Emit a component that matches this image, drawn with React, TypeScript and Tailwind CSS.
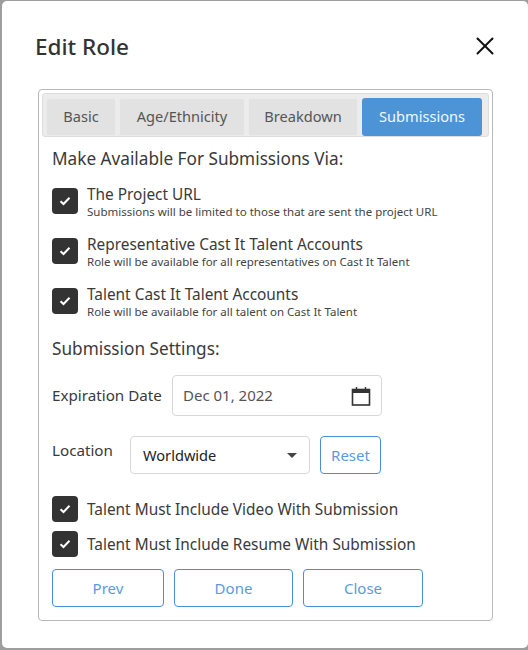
import { X } from 'lucide-react'

const font = { fontFamily: '"Noto Sans", sans-serif' }

function Check({ className = '' }: { className?: string }) {
  return (
    <span className={`flex h-[26px] w-[26px] shrink-0 items-center justify-center rounded-[4px] bg-[#333333] ${className}`}>
      <svg width="12" height="10" viewBox="0 0 12 10" fill="none">
        <path d="M1.5 5.2 4.5 8 10.5 1.8" stroke="#fff" strokeWidth="2" />
      </svg>
    </span>
  )
}

function Option({ title, note }: { title: string; note: string }) {
  return (
    <div className="flex h-[50px] items-start">
      <Check className="mt-[5px]" />
      <div className="ml-[9px] pt-[2px]">
        <div className="text-[15.4px] leading-[20px] text-[#3a3a3a]">{title}</div>
        <div className="text-[11.5px] leading-[14px] text-[#444444]">{note}</div>
      </div>
    </div>
  )
}

function Tab({ label, width, active }: { label: string; width: string; active?: boolean }) {
  return (
    <div
      className={`flex h-[38px] items-center justify-center rounded-[3px] text-[14.6px] ${width} ${
        active ? 'bg-[#4d94d6] text-[#f2f7fc]' : 'border border-[#ebebeb] bg-[#e2e2e2] text-[#555555]'
      }`}
    >
      {label}
    </div>
  )
}

function OutlineButton({ label, width, height = 'h-[38px]' }: { label: string; width: string; height?: string }) {
  return (
    <button className={`flex items-center justify-center rounded-[4px] border border-[#4a90d9] text-[15px] text-[#5b9bdc] ${width} ${height}`}>
      {label}
    </button>
  )
}

export default function App() {
  return (
    <div className="h-[650px] w-[528px] overflow-hidden bg-[#9e9e9e] pl-[2px] pt-px pb-[2px]" style={font}>
      <div className="h-[647px] rounded-[5px] bg-white pl-[36px] pr-[35px] pt-[29px]">
        <div className="flex h-[59px] items-start justify-between">
          <h1 className="ml-[-3px] mt-px text-[22.5px] font-medium leading-[32px] text-[#333333]">Edit Role</h1>
          <X size={30} strokeWidth={1.6} className="mt-[1px] mr-[-7px] text-[#111111]" />
        </div>

        <div className="h-[532px] rounded-[4px] border border-[#b8b8b8] px-[3px] pt-[3px]">
          <div className="flex h-[44px] items-start gap-[3px] rounded-[3px] border border-[#dddddd] bg-[#ececec] pl-[3px] pt-[4px]">
            <Tab label="Basic" width="w-[70px]" />
            <Tab label="Age/Ethnicity" width="w-[126px]" />
            <Tab label="Breakdown" width="w-[110px]" />
            <div className="ml-px">
              <Tab label="Submissions" width="w-[120px]" active />
            </div>
          </div>

          <div className="px-[10px]">
            <div className="mt-[11px] whitespace-nowrap text-[17.2px] leading-[22px] text-[#3a3a3a]">Make Available For Submissions Via:</div>

            <div className="mt-[13px]">
              <Option title="The Project URL" note="Submissions will be limited to those that are sent the project URL" />
              <Option title="Representative Cast It Talent Accounts" note="Role will be available for all representatives on Cast It Talent" />
              <Option title="Talent Cast It Talent Accounts" note="Role will be available for all talent on Cast It Talent" />
            </div>

            <div className="mt-[5px] text-[17.2px] leading-[22px] text-[#3a3a3a]">Submission Settings:</div>

            <div className="mt-[15px] flex items-center">
              <span className="w-[120px] text-[15.2px] text-[#3a3a3a]">Expiration Date</span>
              <div className="flex h-[41px] w-[210px] items-center justify-between rounded-[4px] border border-[#d8d8d8] pl-[10px] pr-[10px] text-[15px] text-[#555555]">
                <span>Dec 01, 2022</span>
                <svg width="20" height="20" viewBox="0 0 20 20" fill="none">
                  <rect x="1.5" y="3.5" width="17" height="15.5" stroke="#333" strokeWidth="1.6" />
                  <rect x="1" y="3" width="18" height="4" fill="#333" />
                  <path d="M5.5 1v3M14.5 1v3" stroke="#333" strokeWidth="1.4" />
                </svg>
              </div>
            </div>

            <div className="mt-[20px] flex items-start">
              <span className="w-[78px] text-[15.2px] leading-[28px] text-[#3a3a3a]">Location</span>
              <div className="flex h-[38px] w-[180px] items-center justify-between rounded-[4px] border border-[#d8d8d8] pl-[12px] pr-[12px] text-[14.6px] text-[#222222]">
                <span className="pt-[2px]">Worldwide</span>
                <span className="h-0 w-0 border-x-[5px] border-t-[5px] border-x-transparent border-t-[#444444]" />
              </div>
              <OutlineButton label="Reset" width="w-[61px] ml-[10px]" />
            </div>

            <div className="mt-[22px] flex flex-col gap-[9px]">
              <div className="flex items-center gap-[9px]">
                <Check />
                <span className="whitespace-nowrap pt-[2px] text-[15.4px] text-[#3a3a3a]">Talent Must Include Video With Submission</span>
              </div>
              <div className="flex items-center gap-[9px]">
                <Check />
                <span className="whitespace-nowrap pt-[2px] text-[15.4px] text-[#3a3a3a]">Talent Must Include Resume With Submission</span>
              </div>
            </div>

            <div className="mt-[12px] flex gap-[10px]">
              <OutlineButton label="Prev" width="w-[112px]" />
              <OutlineButton label="Done" width="w-[119px]" />
              <OutlineButton label="Close" width="w-[120px]" />
            </div>
          </div>
        </div>
      </div>
    </div>
  )
}
